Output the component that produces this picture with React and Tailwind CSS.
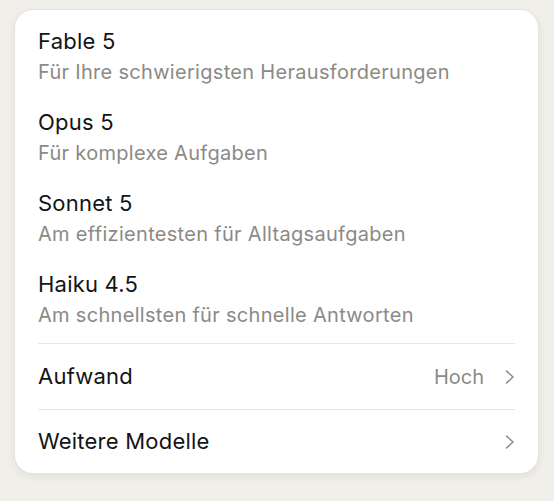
const models = [
    { name: 'Fable 5', desc: 'Für Ihre schwierigsten Herausforderungen' },
    { name: 'Opus 5', desc: 'Für komplexe Aufgaben' },
    { name: 'Sonnet 5', desc: 'Am effizientesten für Alltagsaufgaben' },
    { name: 'Haiku 4.5', desc: 'Am schnellsten für schnelle Antworten' },
];

function Chevron() {
    return (
        <svg width="10" height="14" viewBox="0 0 10 14" fill="none" className="text-[#858480]">
            <path d="M1.5 1 L8 7 L1.5 13" stroke="currentColor" strokeWidth="1.4" strokeLinecap="round" strokeLinejoin="round" />
        </svg>
    );
}

export default function App() {
    return (
        <div
            className="min-h-[501px] w-full bg-[#f1efea] pt-[10px] pl-[15px] pr-[16px]"
            style={{ fontFamily: 'Inter, "Noto Sans", sans-serif' }}
        >
            <div className="h-[463px] rounded-[18px] bg-white px-[23px] pt-[5px] shadow-[0_3px_10px_rgba(0,0,0,0.08)] ring-1 ring-[#e6e3dc]">
                {/* Model list */}
                <div className="flex flex-col">
                    {models.map(model => (
                        <div key={model.name} className="pt-3 pb-[11px]">
                            <div className="text-[22px] leading-[28px] tracking-[0.01em] text-[#141413]">{model.name}</div>
                            <div className="mt-[4px] text-[20px] leading-[26px] tracking-[0.015em] text-[#8b8a86]">{model.desc}</div>
                        </div>
                    ))}
                </div>

                {/* Settings rows */}
                <div className="mt-[4px] border-t border-[#e8e6e1]">
                    <div className="flex h-[65px] items-center justify-between">
                        <span className="text-[22px] tracking-[0.01em] text-[#141413]">Aufwand</span>
                        <div className="flex items-center gap-[21px]">
                            <span className="text-[20px] text-[#8b8a86]">Hoch</span>
                            <Chevron />
                        </div>
                    </div>
                    <div className="flex h-[64px] items-center justify-between border-t border-[#e8e6e1]">
                        <span className="text-[22px] tracking-[0.01em] text-[#141413]">Weitere Modelle</span>
                        <Chevron />
                    </div>
                </div>
            </div>
        </div>
    );
}
